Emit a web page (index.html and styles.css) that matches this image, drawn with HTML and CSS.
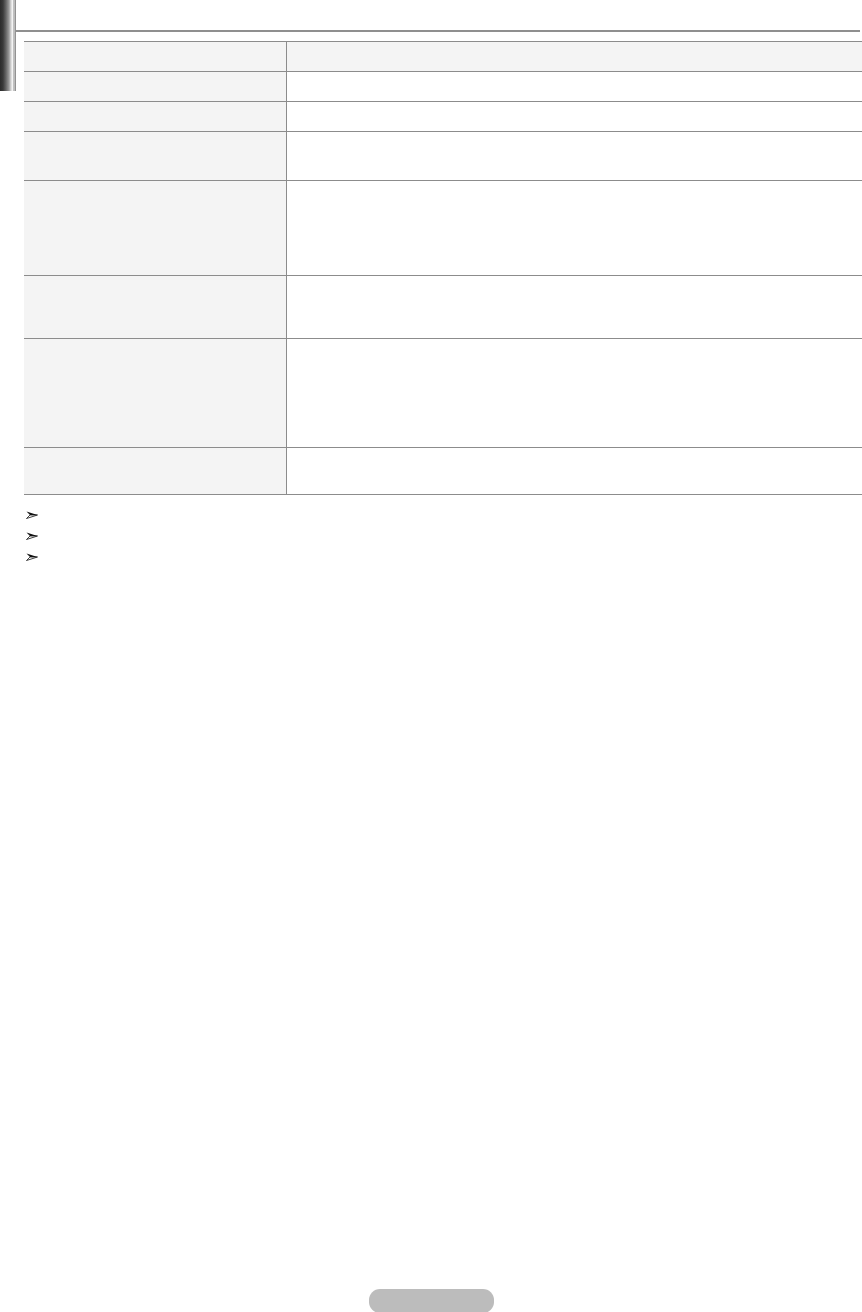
FILE: index.html
```html
<!DOCTYPE html>
<html lang="en">

<head>
    <meta charset="UTF-8">
    <meta name="viewport" content="width=device-width, initial-scale=1.0">
    <title>Manual Page</title>
    <link rel="stylesheet" href="styles.css">
</head>

<body>
    <div class="page">
        <!-- Top Section -->
        <div class="top">
            <div class="side-tab"></div>
            <div class="content">
                <div class="title-bar"></div>

                <!-- Spec Table -->
                <div class="spec-table">
                    <div class="spec-row head">
                        <div class="spec-label"></div>
                        <div class="spec-value"></div>
                    </div>
                    <div class="spec-row">
                        <div class="spec-label"></div>
                        <div class="spec-value"></div>
                    </div>
                    <div class="spec-row">
                        <div class="spec-label"></div>
                        <div class="spec-value"></div>
                    </div>
                    <div class="spec-row two-lines">
                        <div class="spec-label"></div>
                        <div class="spec-value"></div>
                    </div>
                    <div class="spec-row five-lines">
                        <div class="spec-label"></div>
                        <div class="spec-value"></div>
                    </div>
                    <div class="spec-row three-lines">
                        <div class="spec-label"></div>
                        <div class="spec-value"></div>
                    </div>
                    <div class="spec-row six-lines">
                        <div class="spec-label"></div>
                        <div class="spec-value"></div>
                    </div>
                    <div class="spec-row two-lines-short">
                        <div class="spec-label"></div>
                        <div class="spec-value"></div>
                    </div>
                </div>

                <!-- Notes -->
                <ul class="notes">
                    <li>
                        <svg class="note-arrow" viewBox="0 0 12 8" width="12" height="8">
                            <path d="M0.5 0.5 L11.5 4 L4 4 Z" fill="#111" />
                            <path d="M4 4 L11.5 4 L0.5 7.5 Z" fill="#fff" stroke="#111" stroke-width="0.8" stroke-linejoin="round" />
                        </svg>
                    </li>
                    <li>
                        <svg class="note-arrow" viewBox="0 0 12 8" width="12" height="8">
                            <path d="M0.5 0.5 L11.5 4 L4 4 Z" fill="#111" />
                            <path d="M4 4 L11.5 4 L0.5 7.5 Z" fill="#fff" stroke="#111" stroke-width="0.8" stroke-linejoin="round" />
                        </svg>
                    </li>
                    <li>
                        <svg class="note-arrow" viewBox="0 0 12 8" width="12" height="8">
                            <path d="M0.5 0.5 L11.5 4 L4 4 Z" fill="#111" />
                            <path d="M4 4 L11.5 4 L0.5 7.5 Z" fill="#fff" stroke="#111" stroke-width="0.8" stroke-linejoin="round" />
                        </svg>
                    </li>
                </ul>
            </div>
        </div>

        <!-- Page Number -->
        <div class="page-number"></div>
    </div>
</body>

</html>
```

FILE: styles.css
```css
* {
    margin: 0;
    padding: 0;
    box-sizing: border-box;
}

body {
    font-family: 'Liberation Sans', Arial, sans-serif;
    background-color: #fff;
    color: #222;
}

.page {
    display: flex;
    flex-direction: column;
    min-height: 1312px;
    overflow: hidden;
}

.top {
    display: flex;
    align-items: flex-start;
}

.side-tab {
    flex: 0 0 16px;
    height: 91px;
    background: linear-gradient(to right, #2b2b2b 0px, #3a3a3a 3px, #666 6px, #9a9a9a 9px, #d6d6d6 11px, #f4f4f4 12.5px, #a8a8a8 14px, #d0d0d0 15px, #555 16px);
}

.content {
    flex: 1;
}

.title-bar {
    height: 32px;
    margin-right: 2px;
    border-bottom: 2px solid #8f8f8f;
}

.spec-table {
    margin: 9px 0 0 8px;
    border-top: 1px solid #8c8c8c;
}

.spec-row {
    display: grid;
    grid-template-columns: 263px 1fr;
    height: 30px;
    border-bottom: 1px solid #8c8c8c;
}

.spec-row.two-lines {
    height: 49px;
}

.spec-row.five-lines {
    height: 95px;
}

.spec-row.three-lines {
    height: 63px;
}

.spec-row.six-lines {
    height: 109px;
}

.spec-row.two-lines-short {
    height: 47px;
}

.spec-label {
    background-color: #f4f4f4;
    border-right: 1px solid #8c8c8c;
}

.spec-row.head .spec-value {
    background-color: #f4f4f4;
}

.notes {
    list-style: none;
    margin: 9px 0 0 10px;
}

.notes li {
    display: flex;
    align-items: center;
    height: 21px;
}

.note-arrow {
    display: block;
}

.page-number {
    margin: auto auto 0;
    width: 125px;
    height: 24px;
    margin-bottom: -1px;
    background-color: #bcbcbc;
    border-radius: 11px;
}
```
